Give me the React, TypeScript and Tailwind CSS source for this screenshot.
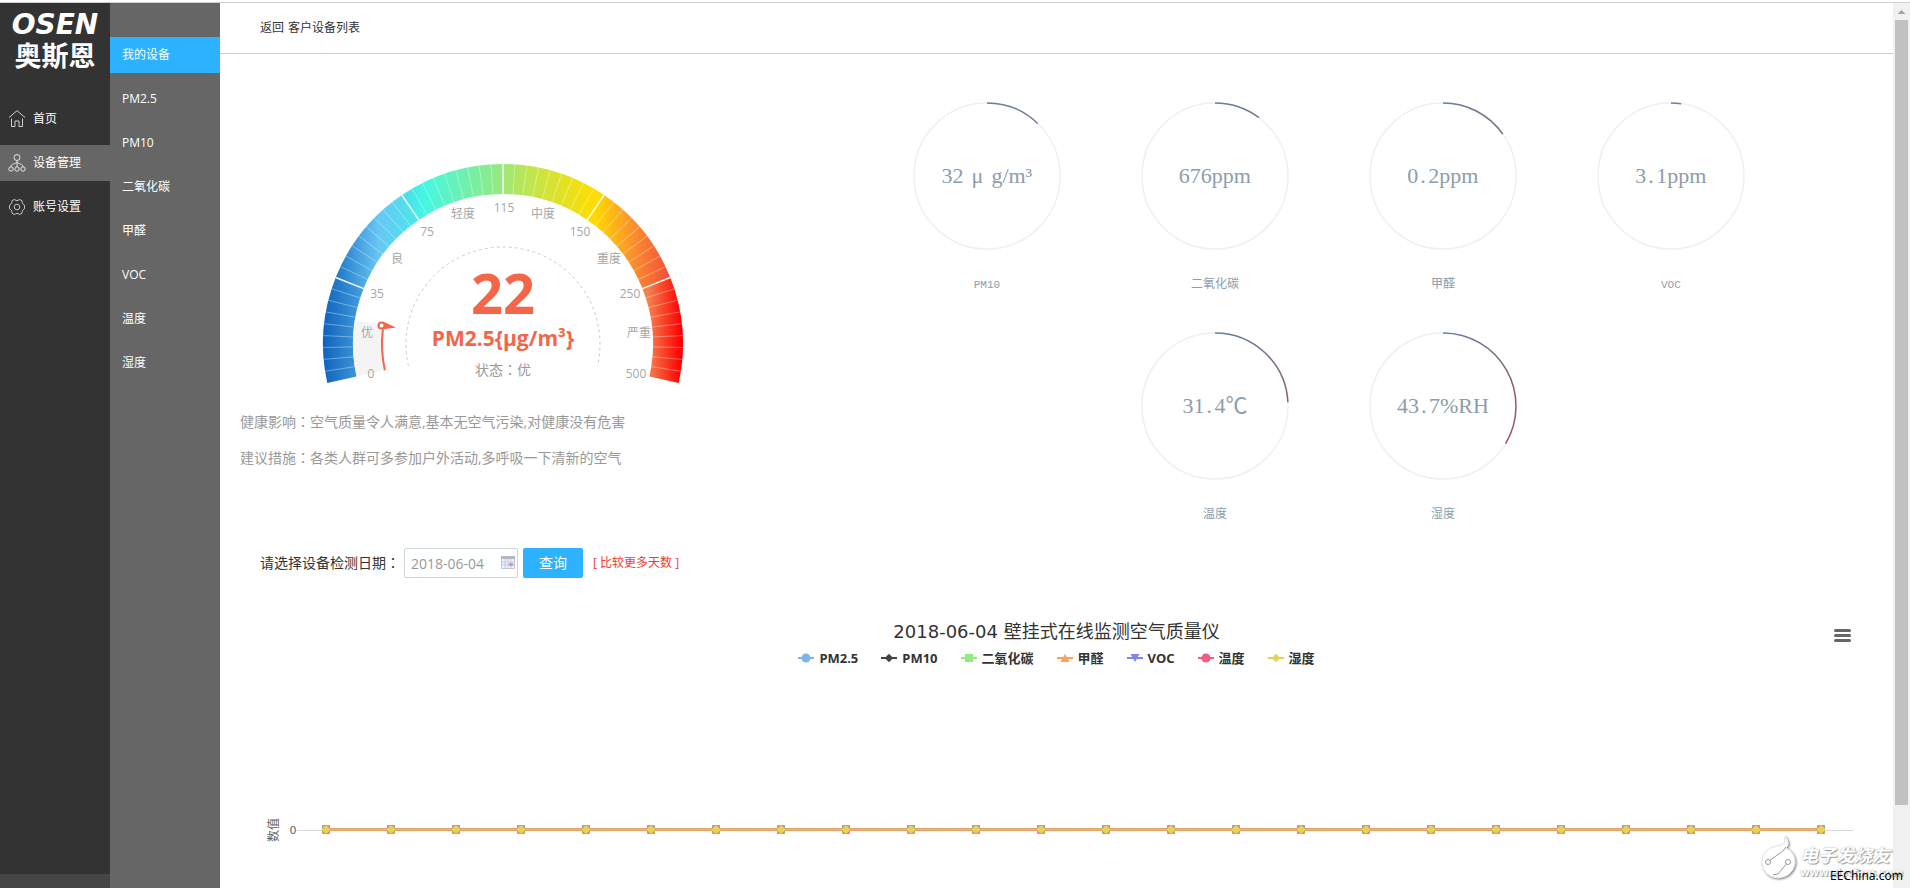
import { useState } from "react";

const MAIN_MENU = [
  { key: "home", label: "首页" },
  { key: "device", label: "设备管理" },
  { key: "account", label: "账号设置" },
];

const SUB_MENU = [
  "我的设备",
  "PM2.5",
  "PM10",
  "二氧化碳",
  "甲醛",
  "VOC",
  "温度",
  "湿度",
];

const RINGS = [
  { label: "PM10", value: "32", mu: true, unit: "g/m³", deg: 44 },
  { label: "二氧化碳", value: "676", unit: "ppm", deg: 37 },
  { label: "甲醛", value: "0.2", unit: "ppm", deg: 55 },
  { label: "VOC", value: "3.1", unit: "ppm", deg: 8 },
  { label: "温度", value: "31.4", unit: "℃", deg: 87 },
  { label: "湿度", value: "43.7", unit: "%RH", deg: 121 },
];

const SERIES = [
  { name: "PM2.5", color: "#7cb5ec", shape: "circle" },
  { name: "PM10", color: "#434348", shape: "diamond" },
  { name: "二氧化碳", color: "#90ed7d", shape: "square" },
  { name: "甲醛", color: "#f7a35c", shape: "up" },
  { name: "VOC", color: "#8085e9", shape: "down" },
  { name: "温度", color: "#f15c80", shape: "circle" },
  { name: "湿度", color: "#e4d354", shape: "diamond" },
];

// gauge geometry
const CX = 200;
const CY = 184;
const START = -12.5;
const STEP = 205 / 6;
const polar = (r, deg) => {
  const a = (deg * Math.PI) / 180;
  return [CX - r * Math.cos(a), CY - r * Math.sin(a)];
};
const band = (r1, r2, from, to) => {
  const [ax, ay] = polar(r1, from);
  const [bx, by] = polar(r1, to);
  const [cx, cy] = polar(r2, to);
  const [dx, dy] = polar(r2, from);
  return `M${ax} ${ay}A${r1} ${r1} 0 0 1 ${bx} ${by}L${cx} ${cy}A${r2} ${r2} 0 0 0 ${dx} ${dy}Z`;
};

const SEGMENTS = [
  { span: [20, 60], mid: 0, colors: ["#0f62bb", "#459fde"] },
  { span: [33, 118], mid: 0.5, colors: ["#1f76c9", "#68c6f4", "#46ece8"] },
  { span: [100, 200], mid: 0.22, colors: ["#4bdcec", "#45f7e2", "#98e97d"] },
  { span: [200, 291], mid: 0.45, colors: ["#9fe876", "#d0e43a", "#ffdd00"] },
  { span: [291, 370], mid: 0.5, colors: ["#ffdc00", "#f98f2e", "#f4473a"] },
  { span: [345, 378], mid: 0, colors: ["#f5814f", "#ff0000"] },
];

const GAUGE_TEXT: [string, number, number][] = [
  ["0", 68, 218],
  ["优", 64, 177],
  ["35", 74, 138],
  ["良", 94, 103],
  ["75", 124, 76],
  ["轻度", 160, 58],
  ["115", 201, 52],
  ["中度", 240, 58],
  ["150", 277, 76],
  ["重度", 306, 103],
  ["250", 327, 138],
  ["严重", 336, 177],
  ["500", 333, 218],
];

// full-width colon with its dots in the middle of the square
const Colon = () => (
  <span className="leading-none font-['Noto_Sans_CJK_TC',sans-serif]">：</span>
);

const MenuIcon = ({ name }) => {
  if (name === "home")
    return (
      <svg width="18" height="18" viewBox="0 0 18 18" fill="none" stroke="#d0d0d0">
        <path d="M1 7.500 9 .7 17 7.500M3.500 8.500v8h3.500v-5.500h4v5.500h3.500v-8" />
      </svg>
    );
  if (name === "device")
    return (
      <svg width="18" height="18" viewBox="0 0 18 18" fill="none" stroke="#e6e6e6">
        <circle cx="9" cy="3.5" r="3" />
        <circle cx="3" cy="15" r="2.2" />
        <circle cx="9" cy="15" r="2.2" />
        <circle cx="15" cy="15" r="2.2" />
        <path d="M9 6.500v6M9 8C8 10 3 9.500 3 12.800M9 8c1 2 6 1.500 6 4.800" />
      </svg>
    );
  return (
    <svg width="18" height="18" viewBox="0 0 18 18" fill="none" stroke="#c4c4c4">
      <circle cx="9" cy="9" r="2.800" />
      <path d="M6.200 1.500Q9 4 11.800 1.500L14 2.800Q13.500 6 16.500 7.200V10.800Q13.500 12 14 15.200L11.800 16.500Q9 14 6.200 16.500L4 15.200Q4.500 12 1.500 10.800V7.200Q4.500 6 4 2.800Z" />
    </svg>
  );
};

const Logo = () => (
  <div className="flex h-[88px] flex-col items-center pt-2 text-white">
    <div className="text-[28px] leading-7 font-bold italic font-['DejaVu_Sans',sans-serif]">
      OSEN
    </div>
    <div className="text-[27px] leading-8 font-bold font-['Noto_Sans_CJK_SC',sans-serif]">
      奥斯恩
    </div>
  </div>
);

const Gauge = () => (
  <svg
    width="400"
    height="240"
    viewBox="0 0 400 240"
    className="mx-auto font-['Open_Sans','Noto_Sans_CJK_SC',sans-serif]"
  >
    <defs>
      {SEGMENTS.map(({ span, mid, colors }, i) => (
        <linearGradient
          key={i}
          id={`seg${i}`}
          gradientUnits="userSpaceOnUse"
          x1={span[0]}
          x2={span[1]}
          y1="0"
          y2="0"
        >
          <stop offset="0" stopColor={colors[0]} />
          {colors[2] && <stop offset={mid} stopColor={colors[1]} />}
          <stop offset="1" stopColor={colors[2] || colors[1]} />
        </linearGradient>
      ))}
    </defs>
    {SEGMENTS.map((_, i) => (
      <path
        key={i}
        d={band(180, 150, START + i * STEP, START + (i + 1) * STEP)}
        fill={`url(#seg${i})`}
      />
    ))}
    {Array.from({ length: 53 }, (_, i) => {
      const major = (i + 1) % 9 === 0;
      const deg = START + ((i + 1) * STEP) / 9;
      const [x1, y1] = polar(150, deg);
      const [x2, y2] = polar(180, deg);
      return (
        <line
          key={i}
          x1={x1}
          y1={y1}
          x2={x2}
          y2={y2}
          stroke="#fff"
          strokeWidth={major ? 1.5 : 1}
          strokeOpacity={major ? 0.95 : 0.35}
        />
      );
    })}
    {/* current value */}
    <path d={band(150, 121, START, 9)} fill="#f4f4f4" />
    <path
      d={`M${polar(121, START)}A121 121 0 0 1 ${polar(121, 7)}`}
      fill="none"
      stroke="#f4664a"
      strokeWidth="2"
    />
    <path d="M80 161.500 93 167.500 79 169.500Z" fill="#f4664a" />
    <circle cx="78.500" cy="165.500" r="3" fill="#fff" stroke="#f4664a" strokeWidth="2" />
    <path
      d={`M${polar(97, -13)}A97 97 0 1 1 ${polar(97, 193)}`}
      fill="none"
      stroke="#ccc"
      strokeDasharray="3 3"
    />
    {GAUGE_TEXT.map(([t, x, y]) => (
      <text key={t} x={x} y={y} textAnchor="middle" fontSize="12" fill="#a6a6a6">
        {t}
      </text>
    ))}
    <g textAnchor="middle">
      <text x="200" y="154" fontSize="56" fontWeight="700" fill="#f4664a">
        22
      </text>
      <text x="200" y="186" fontSize="21" fontWeight="700" fill="#f4664a">
        {"PM2.5{μg/m³}"}
      </text>
      <text x="200" y="215" fontSize="14" fill="#999">
        状态
        <tspan className="font-['Noto_Sans_CJK_TC',sans-serif]">：</tspan>优
      </text>
    </g>
  </svg>
);

const Ring = ({ label, value, unit, mu = false, deg }) => {
  const a = (deg * Math.PI) / 180;
  const x = 75 + 73 * Math.sin(a);
  const y = 75 - 73 * Math.cos(a);
  const [whole, decimal] = value.split(".");
  const latin = /^[A-Z0-9]+$/.test(label);
  return (
    <div className="flex w-[228px] flex-col items-center text-[#8d9dac]">
      <div className="relative h-[150px] w-[150px]">
        <svg width="150" height="150" viewBox="0 0 150 150" fill="none">
          <defs>
            <linearGradient id="ring" gradientUnits="userSpaceOnUse" x1="75" y1="0" x2="140" y2="110">
              <stop offset="0" stopColor="#6582a0" />
              <stop offset="1" stopColor="#a1505f" />
            </linearGradient>
            <linearGradient id="track" gradientUnits="userSpaceOnUse" x1="0" y1="50" x2="150" y2="100">
              <stop offset="0" stopColor="#ebf1f3" />
              <stop offset="1" stopColor="#f4eff1" />
            </linearGradient>
          </defs>
          <circle cx="75" cy="75" r="73" stroke="url(#track)" strokeWidth="1.500" />
          <path d={`M75 2A73 73 0 0 1 ${x} ${y}`} stroke="url(#ring)" strokeWidth="1.500" />
        </svg>
        <div className="absolute inset-0 flex items-center justify-center text-[22px] font-['Liberation_Serif','Noto_Sans_CJK_SC',serif]">
          {whole}
          {decimal && <span className="w-2.5 pl-0.5">.</span>}
          {decimal}
          {mu && <span className="px-2">μ</span>}
          {unit}
        </div>
      </div>
      <div
        className={`mt-[26px] leading-4 font-['Liberation_Mono','Noto_Sans_CJK_SC',monospace] ${latin ? "text-[11px]" : "text-xs"}`}
      >
        {label}
      </div>
    </div>
  );
};

const Marker = ({ shape, color }) => (
  <svg width="16" height="10" viewBox="0 0 16 10" fill={color}>
    <rect y="4" width="16" height="2" />
    {shape === "circle" && <circle cx="8" cy="5" r="4.500" />}
    {shape === "diamond" && <path d="M8 .8 12.200 5 8 9.200 3.800 5Z" />}
    {shape === "square" && <rect x="4" y="1" width="8" height="8" />}
    {shape === "up" && <path d="M8 1 12.500 9H3.500Z" />}
    {shape === "down" && <path d="M8 9 3.500 1h9Z" />}
  </svg>
);

const LineChart = () => (
  <section className="relative mx-10 mt-[41px] text-[#333] font-['DejaVu_Sans','Noto_Sans_CJK_SC',sans-serif]">
    <h2 className="text-center text-lg leading-[26px] font-normal">
      2018-06-04 壁挂式在线监测空气质量仪
    </h2>
    <button aria-label="menu" className="absolute top-[10px] right-[2px] flex flex-col gap-[2px]">
      <span className="block h-[3px] w-[17px] rounded bg-[#666]" />
      <span className="block h-[3px] w-[17px] rounded bg-[#666]" />
      <span className="block h-[3px] w-[17px] rounded bg-[#666]" />
    </button>
    <ul className="mt-[3px] flex justify-center gap-[23px]">
      {SERIES.map((s) => (
        <li
          key={s.name}
          className="flex items-center gap-[5px] text-[13px] leading-5 font-bold font-['Noto_Sans','Noto_Sans_CJK_SC',sans-serif]"
        >
          <Marker shape={s.shape} color={s.color} />
          {s.name}
        </li>
      ))}
    </ul>
    <svg width="100%" height="300" viewBox="0 0 1593 300">
      <text
        transform="translate(18 162) rotate(-90)"
        textAnchor="middle"
        fontSize="12"
        fill="#666"
      >
        数值
      </text>
      <text x="33" y="166" textAnchor="middle" fontSize="11" fill="#606060">
        0
      </text>
      <path d="M37 162.500H1593" stroke="#d8d8d8" />
      <path d="M66 161.500H1560" stroke="#dfa265" strokeWidth="3" />
      <path d="M66 161.500H1560" stroke="#e4c454" />
      {Array.from({ length: 24 }, (_, i) => (
        <g key={i} transform={`translate(${66 + i * 65} 161.500)`}>
          <rect x="-4" y="-4.500" width="8" height="4" fill="#7cb5ec" />
          <rect x="-4" width="8" height="4.500" fill="#d9a860" />
          <circle r="4.200" fill="#f15c80" />
          <path d="M-1-4H1L4-1V1L1 4H-1L-4 1V-1Z" fill="#e4d354" />
        </g>
      ))}
    </svg>
  </section>
);

const Watermark = () => (
  <div className="pointer-events-none absolute right-[7px] bottom-0 flex items-end">
    <svg
      width="40"
      height="48"
      viewBox="0 0 40 48"
      fill="none"
      className="mb-[6px] drop-shadow-[1px_1px_1px_rgba(0,0,0,0.5)]"
    >
      <path
        d="M25 2Q31 9 26 14Q36 19 35 30Q32 43 18 44Q4 43 2 29Q2 15 17 12Q27 12 25 2Z"
        fill="#fff"
        stroke="#e8e8e8"
      />
      <path d="M9 27 23 17 26 13M13 41 18 40 28 28" stroke="#999" />
      <circle cx="8" cy="28" r="2.500" fill="#fff" stroke="#999" />
      <circle cx="28" cy="28" r="2.500" fill="#fff" stroke="#999" />
    </svg>
    <div className="relative pb-2.5 text-white">
      <div className="text-[18px] leading-6 font-bold italic [text-shadow:1px_1px_1px_#999,0_0_1px_#999] font-['Noto_Sans_CJK_SC',sans-serif]">
        电子发烧友
      </div>
      <div className="text-[11px] leading-3 font-bold [text-shadow:1px_1px_1px_#999,0_0_1px_#999] font-['Noto_Sans',sans-serif]">
        www.elecfans.com
      </div>
      <div className="absolute right-0 bottom-0 text-xs leading-6 text-black font-['Noto_Sans',sans-serif]">
        EEChina.com
      </div>
    </div>
  </div>
);

const App = () => {
  const [active, setActive] = useState("我的设备");
  const [date, setDate] = useState("2018-06-04");

  return (
    <div className="relative flex h-screen flex-col overflow-hidden bg-white pt-[2px] text-xs text-[#333] font-['Open_Sans','Noto_Sans_CJK_SC',sans-serif]">
      <div className="h-px shrink-0 bg-[#d0d0d0]" />
      <div className="flex min-h-0 flex-1">
        <nav className="flex w-[110px] shrink-0 flex-col bg-[#333] text-white">
          <Logo />
          <ul className="mt-[10px] flex flex-col gap-2">
            {MAIN_MENU.map((m) => (
              <li key={m.key}>
                <a
                  href="#"
                  className={`flex h-9 items-center gap-[7px] pl-2 ${m.key === "device" ? "bg-[#666]" : ""}`}
                >
                  <MenuIcon name={m.key} />
                  {m.label}
                </a>
              </li>
            ))}
          </ul>
          <div className="mt-auto h-[14px] bg-[#454545]" />
        </nav>

        <nav className="w-[110px] shrink-0 bg-[#666] pt-[34px] text-white">
          <ul className="flex flex-col gap-2">
            {SUB_MENU.map((name) => (
              <li key={name}>
                <a
                  href="#"
                  onClick={() => setActive(name)}
                  className={`flex h-9 items-center pl-3 ${active === name ? "bg-[#2cb2ff]" : ""}`}
                >
                  {name}
                </a>
              </li>
            ))}
          </ul>
        </nav>

        <main className="min-w-0 flex-1 overflow-hidden">
          <header className="flex h-[51px] items-center gap-1 border-b border-[#ccc] pl-10">
            <a href="#">返回</a>
            <a href="#">客户设备列表</a>
          </header>

          <div className="flex">
            <section className="w-[34%] pt-[106px] pr-0.5">
              <Gauge />
              <div className="pt-1 pl-5 text-sm leading-9 text-[#999]">
                <p>
                  健康影响
                  <Colon />
                  空气质量令人满意,基本无空气污染,对健康没有危害
                </p>
                <p>
                  建议措施
                  <Colon />
                  各类人群可多参加户外活动,多呼吸一下清新的空气
                </p>
              </div>
            </section>
            <section className="flex flex-1 flex-wrap content-start justify-center gap-y-[38px] pt-[47px] pr-[88px] pl-16">
              {RINGS.map((r) => (
                <Ring key={r.label} {...r} />
              ))}
            </section>
          </div>

          <form
            className="mt-[25px] flex items-center pl-10"
            onSubmit={(e) => e.preventDefault()}
          >
            <label htmlFor="date" className="w-36 text-sm whitespace-nowrap">
              请选择设备检测日期
              <Colon />
            </label>
            <div className="relative">
              <input
                id="date"
                value={date}
                onChange={(e) => setDate(e.target.value)}
                className="block h-[30px] w-[114px] rounded-xs border border-[#ccd6df] pl-1.5 text-sm text-[#999] outline-none"
              />
              <svg width="14" height="13" viewBox="0 0 14 13" className="absolute top-2 right-[3px]">
                <rect width="14" height="13" rx="1" fill="#bcc6e0" />
                <path d="M0 0h14v3H0z" fill="#b3b7c4" />
                <path d="M1 3h12v9H1z" fill="#eef1fa" />
                <path d="M1 6h12M1 9h12M4 3v9M7 3v9M10 3v9" stroke="#c3cce6" />
                <path d="M8 7h4v3H8z" fill="#e59a88" />
              </svg>
            </div>
            <button className="ml-[5px] h-[30px] w-[60px] rounded-xs bg-[#2cb2ff] text-sm text-white">
              查询
            </button>
            <a href="#" className="ml-[10px] text-[#f43b30]">
              [ 比较更多天数 ]
            </a>
          </form>

          <LineChart />
        </main>

        <div className="flex w-[17px] shrink-0 flex-col items-center bg-[#f1f1f1]">
          <svg width="17" height="17" viewBox="0 0 17 17" fill="#a3a3a3">
            <path d="M8.500 7 12.500 11H4.500Z" />
          </svg>
          <div className="h-[785px] w-[13px] bg-[#c1c1c1]" />
        </div>
      </div>
      <Watermark />
    </div>
  );
};

export default App;
